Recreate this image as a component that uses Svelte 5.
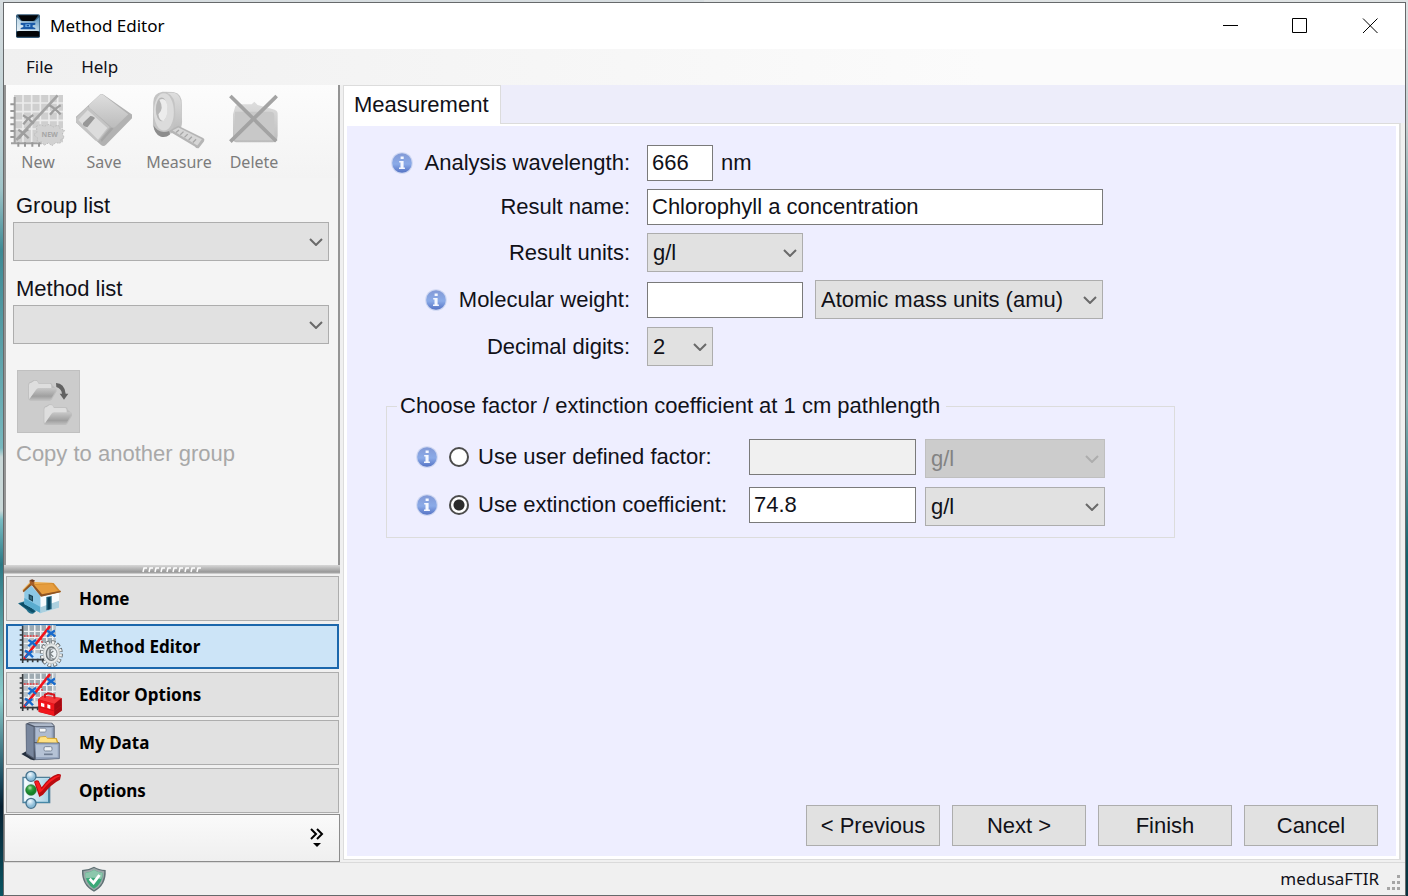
<script lang="ts">
  let wavelength = $state('666');
  let resultName = $state('Chlorophyll a concentration');
  let weight = $state('');
  let factor = $state('');
  let coefficient = $state('74.8');
  let mode = $state('coefficient');
  let active = $state('Method Editor');
  const sections = ['Home', 'Method Editor', 'Editor Options', 'My Data', 'Options'];
</script>

{#snippet chevron()}
  <svg class="chevron" viewBox="0 0 14 8" aria-hidden="true"><path d="M1 1l6 6 6-6" /></svg>
{/snippet}

{#snippet info()}
  <svg class="info" viewBox="0 0 22 22" aria-hidden="true">
    <circle cx="11" cy="11" r="10.8" fill="#cdd6f1" />
    <circle cx="11" cy="11" r="9.8" fill="url(#infoFill)" />
    <path d="M9.6 4.5h3.1v2.5H9.6zM8.2 9h4.4v6.6h1.3V17H8v-1.4h1.5v-5.2H8.2z" fill="#f4f7ff" />
  </svg>
{/snippet}

{#snippet chart()}
  <path d="M46 166h98v84H46z" fill="#b9c2c8" />
  <path d="M46 184h98M46 202h98M46 220h98M46 238h98M62 166v84M80 166v84M98 166v84M116 166v84M134 166v84" stroke="#eef1f3" stroke-width="4" />
  <path d="M48 168h12v14H48zm18 0h12v14H66zm18 0h12v14H84zm18 0h12v14h-12zm18 0h12v14h-12zM48 186h12v14H48zm18 0h12v14H66zm18 0h12v14H84zm36 0h12v14h-12zM102 204h12v14h-12zm18 0h12v14h-12zM84 222h12v14H84z" fill="#98a5ac" opacity=".8" />
  <path d="M44 168v104M36 269h72" stroke="#34393d" stroke-width="5" fill="none" />
  <path d="M35 180h9M35 195h9M35 210h9M35 225h9M35 240h9M35 255h9M44 269v10M59 266v11M74 266v11M89 266v11M104 266v11" stroke="#34393d" stroke-width="5" />
  <path d="M47 198h46M99 204l4 16" stroke="#e8383b" stroke-width="4" stroke-dasharray="6 3" />
  <path d="M50 264L124 171" stroke="#f3131a" stroke-width="8" stroke-linecap="round" />
  <path d="M117 182q12 6 25 18M141 182q-13 6-24 18M61 210q12 6 23 18M84 209q-12 8-23 20M51 242q12 6 24 20M73 243q-12 8-22 20" stroke="#176acb" stroke-width="7" fill="none" />
{/snippet}

{#snippet folder()}
  <path d="M86 584q0-8 8-9l8-5 10 1 5 8h36q5 1 5 7l12 10 1 8-14 24q-3 4-8 4H93q-7 0-7-7z" fill="#bdbdbd" />
  <path d="M88 585q0-7 7-7l9-6 8 1 5 8h34q4 1 4 7v8h-40l-25 32q-2-3-2-8z" fill="#dedede" />
  <path d="M89 628l20-29q3-5 8-5h50q5 2 2 7l-14 24q-3 4-8 4H92z" fill="url(#folderFill)" />
{/snippet}

{#snippet sectionIcon(name: string)}
  {#if name === 'Home'}
    <svg viewBox="24 21 150 129" aria-hidden="true">
      <path d="M30 100l32-10 22 34-9 7q-12 2-20-12z" fill="#23708c" />
      <path d="M33 101l25-5 23 30-9 1z" fill="#0c4d67" />
      <path d="M49 60l18-16 32 35v51L49 102z" fill="#8cc8e5" />
      <path d="M49 84v18l50 28v-18z" fill="#5aaccf" />
      <path d="M97 76l56-11v48l-55 17z" fill="#f7fbfd" />
      <path d="M97 112l56-20v21l-55 17z" fill="#abd0df" />
      <path d="M115 81l16-3v39l-16 4z" fill="#246985" />
      <path d="M119 83l8-2v36l-8 2z" fill="#073f58" />
      <path d="M62 72l13 6v17l-13-7z" fill="#173e50" /><path d="M65 77l7 3v10l-7-4z" fill="#31687d" />
      <path d="M67 35l66 3 26 27-58 13-29-35-25 21-4-4z" fill="#edae52" />
      <path d="M72 43l65-4 22 27-58 13z" fill="#d38b2f" />
      <path d="M74 45l59-3 17 21-47 10z" fill="#e69d3e" />
      <path d="M44 63l27-27 31 37 57-11-2 5-58 13-28-35-24 22z" fill="#8d5424" />
      <path d="M64 32l15-2v13l-11 4z" fill="#a65e28" /><path d="M64 31l9-3 8 4-7 4z" fill="#6b3a20" />
    </svg>
  {:else if name === 'Method Editor'}
    <svg viewBox="24 165 150 129" aria-hidden="true">
      {@render chart()}
      <g fill="none">
        <ellipse cx="130" cy="251" rx="26" ry="32" fill="#eceeee" stroke="#5f6568" stroke-width="17" pathLength="168" stroke-dasharray="9 5" />
        <ellipse cx="130" cy="251" rx="26" ry="32" stroke="#f0f2f2" stroke-width="12" pathLength="168" stroke-dasharray="6 8" stroke-dashoffset="-1.5" />
        <ellipse cx="130" cy="251" rx="24" ry="30" fill="#e6e9e9" stroke="#c0c5c6" stroke-width="3" />
        <ellipse cx="130" cy="251" rx="15" ry="20" fill="#cbd0d3" stroke="#6e7578" stroke-width="4" />
        <ellipse cx="136" cy="251" rx="11" ry="15" fill="#eef3f6" stroke="#93999c" stroke-width="3" />
        <path d="M126 236v30M126 251l10-8M126 251l10 9" stroke="#7a8184" stroke-width="4" />
      </g>
    </svg>
  {:else if name === 'Editor Options'}
    <svg viewBox="24 309 150 129" aria-hidden="true">
      <g transform="translate(0 144)">{@render chart()}</g>
      <path d="M90 388l14-11 57 7 1 37-23 17-47-12z" fill="#cf1118" />
      <path d="M91 389l48 13v35l-47-12z" fill="#f1151b" /><path d="M139 402l22-17v37l-22 15z" fill="#a50911" />
      <path d="M91 388l15-11 54 7-21 17z" fill="#f5383a" />
      <path d="M111 383v-9l9-4 18 4 2 12" fill="none" stroke="#d5131b" stroke-width="6" />
      <path d="M99 398l10 3v11l-10-3zM118 403l9 3v11l-9-3z" fill="#fff" /><path d="M91 410l48 13 22-16" stroke="#c20a12" stroke-width="2" fill="none" />
    </svg>
  {:else if name === 'My Data'}
    <svg viewBox="24 453 150 129" aria-hidden="true">
      <path d="M40 552l16-9 25 12 2 15q-15 2-22-6z" fill="#25303f" />
      <path d="M53 461l11-4 68 1 8 9v47l14 3v49l-73 4-27-17z" fill="#4c5566" />
      <path d="M55 462l22 9v92l-22-14z" fill="#78869d" /><path d="M60 460h70l8 8H80z" fill="#aeb9ca" />
      <path d="M80 470h57v46H80z" fill="#94a3bb" /><path d="M84 474h47v35H84z" fill="#aebbd0" />
      <rect x="94" y="475" width="20" height="11" rx="3" fill="#f6f8fa" stroke="#6b778a" stroke-width="2" />
      <path d="M86 519l6-19 21-2 4 5 29 1 6 15z" fill="#d5a52e" /><path d="M91 517l6-15 17-1 4 5 25 1 4 12z" fill="#ffe284" />
      <path d="M79 519h75v47l-71 3z" fill="#96a6bf" stroke="#59657a" stroke-width="2" /><path d="M84 524h65v37H84z" fill="#b5c2d5" />
      <rect x="108" y="530" width="24" height="13" rx="4" fill="#edf1f5" stroke="#7a8799" stroke-width="3" /><path d="M108 553h26" stroke="#6e7c91" stroke-width="5" />
    </svg>
  {:else}
    <svg viewBox="24 597 150 129" aria-hidden="true">
      <path d="M45 622h80v76H45z" fill="#c0e0ef" stroke="#517f99" stroke-width="4" />
      <path d="M49 626h72v68H49z" fill="url(#paper)" />
      <path d="M122 628v69H48" stroke="#4688a7" stroke-width="4" fill="none" />
      <circle cx="69" cy="619" r="15" fill="url(#blueBall)" stroke="#47738e" stroke-width="4" />
      <circle cx="69" cy="700" r="15" fill="url(#blueBall)" stroke="#47738e" stroke-width="4" />
      <circle cx="69" cy="660" r="16" fill="url(#greenBall)" stroke="#226e32" stroke-width="2" />
      <path d="M78 635q7-6 14-3l9 20q23-33 48-40 10-1 10 4l-3 13q-25 12-51 45l-11 7z" fill="#bb0c11" />
      <path d="M81 636q7-4 10-1l10 23q23-35 52-42l4 2q-29 11-55 45l-8 6z" fill="#fa1c20" />
    </svg>
  {/if}
{/snippet}

<svg class="defs" width="0" height="0" aria-hidden="true">
  <defs>
    <linearGradient id="infoFill" x1="0" y1="0" x2="0" y2="1"><stop offset="0" stop-color="#8299d6" /><stop offset=".55" stop-color="#8babe8" /><stop offset="1" stop-color="#5472c4" /></linearGradient>
    <linearGradient id="folderFill" x1="0" y1="0" x2="0" y2="1"><stop offset="0" stop-color="#c8c8c8" /><stop offset=".7" stop-color="#9f9f9f" /><stop offset="1" stop-color="#bababa" /></linearGradient>
    <linearGradient id="silver" x1="0" y1="0" x2="0" y2="1"><stop offset="0" stop-color="#dedede" /><stop offset="1" stop-color="#bcbcbc" /></linearGradient>
    <linearGradient id="appFill" x1="0" y1="1" x2="1" y2="0"><stop offset="0" stop-color="#e9f2f7" /><stop offset=".45" stop-color="#c2dbea" /><stop offset="1" stop-color="#558fbb" /></linearGradient>
    <linearGradient id="paper"><stop offset="0" stop-color="#f8fdff" /><stop offset="1" stop-color="#a8d2e6" /></linearGradient>
    <radialGradient id="blueBall" cx=".4" cy=".3"><stop offset="0" stop-color="#f4fbff" /><stop offset="1" stop-color="#8abbd7" /></radialGradient>
    <radialGradient id="greenBall" cx=".4" cy=".3"><stop offset="0" stop-color="#b8e5ae" /><stop offset=".5" stop-color="#309f40" /><stop offset="1" stop-color="#158328" /></radialGradient>
  </defs>
</svg>

<div class="desktop">
  <div class="window">
    <header class="titlebar">
      <svg class="app-icon" viewBox="48 38 72 72" aria-hidden="true">
        <rect x="48" y="39" width="72" height="71" rx="5" fill="#345a78" />
        <path d="M50 47l14 13h40l14-13v42H50z" fill="url(#appFill)" />
        <path d="M54 42h61l-10 13q-2 4-8 4H71q-6 0-8-4zM50 92q4-3 10-3h48q6 0 10 3v14H50z" fill="#020407" />
        <path d="M62 64h44v6l-8 2v5l8 3v4H62v-4l8-3v-5l-8-2z" fill="#1a59a7" /><path d="M76 69h15v8H76z" fill="#77b6ed" /><path d="M80 71h7v4h-7z" fill="#174b92" />
      </svg>
      <span class="title">Method Editor</span>
      <div class="caption">
        <button aria-label="Minimize"><svg viewBox="0 0 16 16"><path d="M1 7.5h15" /></svg></button>
        <button aria-label="Maximize"><svg viewBox="0 0 16 16"><path d="M.5.5h14v14H.5z" /></svg></button>
        <button aria-label="Close"><svg viewBox="0 0 16 16"><path d="M1 .5l14.5 14.5M15.500 .5L1 15" /></svg></button>
      </div>
    </header>

    <nav class="menu" aria-label="Menu"><button>File</button><button>Help</button></nav>

    <div class="body">
      <aside class="sidebar">
        <div class="tools">
          <div class="toolbar">
            <button disabled>
              <svg viewBox="33 275 168 180" aria-hidden="true">
                <path d="M45 290h147v142H45z" fill="#cfcfcf" />
                <path d="M45 314h147M45 340h147M45 366h147M45 392h147M72 290v142M98 290v142M124 290v142M150 290v142M176 290v142" stroke="#ececec" stroke-width="5" />
                <path d="M47 296v142M36 435h92" stroke="#a0a0a0" stroke-width="6" />
                <path d="M34 318h13M34 338h13M34 358h13M34 378h13M34 398h13M34 416h13M58 432v13M78 432v13M100 432v13M120 432v13" stroke="#989898" stroke-width="6" />
                <path d="M52 425L176 291" stroke="#a4a4a4" stroke-width="8" />
                <path d="M151 321q15 8 34 27M185 321q-15 8-32 28M72 351q15 8 32 25M103 350q-15 8-30 28M58 394q15 8 31 26M88 393q-15 8-28 28" stroke="#9e9e9e" stroke-width="7" fill="none" />
                <path d="M112 384l12-5 12 5 14-6 13 8 14-6 7 12 13 4-7 11 6 11-10 5-3 12-13-2-11 9-11-8-13 7-6-10-15 1 2-13-12-10 10-7z" fill="#d2d2d2" stroke="#bdbdbd" stroke-width="3" stroke-dasharray="5 4" />
                <text x="152" y="415" text-anchor="middle" font-size="21" font-weight="700" fill="#a6a6a6">NEW</text>
              </svg>
              <span>New</span>
            </button>
            <button disabled>
              <svg viewBox="230 275 168 180" aria-hidden="true">
                <path d="M228 357l75-69q5-3 10 1l86 60q4 4 0 10l-79 80q-7 7-15 1l-73-66q-8-8-4-17z" fill="#b2b2b2" />
                <path d="M271 318l33-30q4-1 9 3l74 57-39 37q-6 5-12 1l-66-58q-3-6 1-10z" fill="url(#silver)" />
                <path d="M229 360l36-36 66 62-34 42q-5 2-10-2l-56-53z" fill="#c4c4c4" />
                <path d="M237 365l28-30 59 54-28 35z" fill="#dcdcdc" />
                <path d="M251 374l22-21q7-1 14 6l-23 28q-8-1-13-7z" fill="#979797" />
                <path d="M304 424l28-33q5-5 10 0l-35 40z" fill="#a5a5a5" />
              </svg>
              <span>Save</span>
            </button>
            <button class="wide" disabled>
              <svg viewBox="450 270 174 180" aria-hidden="true">
                <path d="M457 305q0-29 29-33l34 1q29 6 26 42v37q3 29-8 41l-48 17q-28-4-34-32z" fill="#c4c4c4" />
                <path d="M500 275h22q23 8 22 42v35q2 27-8 38l-22 5q15-30 11-69 1-40-25-51z" fill="url(#silver)" />
                <ellipse cx="490" cy="335" rx="31" ry="58" fill="#dcdcdc" /><ellipse cx="483" cy="327" rx="18" ry="37" fill="#b6b6b6" />
                <path d="M476 297q21-10 25 20 3 30-12 46-13 1-16-21 19-17 3-45z" fill="#ececec" />
                <path d="M458 377q17 28 49 17l2 11q-14 12-30 6-19-8-21-34z" fill="#8d8d8d" />
                <path d="M505 394l30-16 77 38q6 3 3 10l-17 22q-8 1-12-6z" fill="#b5b5b5" />
                <path d="M517 393l18-10 73 37-14 19z" fill="#d6d6d6" /><path d="M528 399l9-8m4 15l10-10m3 18l10-10m3 18l10-10m3 18l10-10" stroke="#a6a6a6" stroke-width="4" />
              </svg>
              <span>Measure</span>
            </button>
            <button disabled>
              <svg viewBox="680 275 168 180" aria-hidden="true">
                <path d="M701 348l7-24q5-6 12-6h37l8-8 10 10 44 12q17 3 16 16v64q-1 21-16 20H711q-9-1-10-10z" fill="url(#silver)" />
                <path d="M707 340h106q12 0 12 12v74H712q-8 0-8-8z" fill="#c8c8c8" />
                <path d="M697 297l130 128M828 297L697 426" stroke="#a3a3a3" stroke-width="11" stroke-linecap="square" />
              </svg>
              <span>Delete</span>
            </button>
          </div>

          <div class="lists">
            <label for="group">Group list</label>
            <div class="select"><select id="group"><option></option></select>{@render chevron()}</div>
            <label for="method">Method list</label>
            <div class="select"><select id="method"><option></option></select>{@render chevron()}</div>
            <button id="copy" class="copy" disabled aria-label="Copy to another group">
              <svg viewBox="55 543 183 183" aria-hidden="true">
                {@render folder()}
                <g transform="translate(46 73)">{@render folder()}</g>
                <path d="M169 579q25 0 29 32h8l-13 18-13-18h7q-2-15-17-20z" fill="#626262" />
              </svg>
            </button>
            <label class="muted" for="copy">Copy to another group</label>
          </div>
        </div>

        <div class="splitter"><svg viewBox="0 0 60 6" aria-hidden="true">
          {#each Array(10) as _, i}<path d="M{i * 6 + 1} 5l1-4h3" stroke="#fff" stroke-width="1.500" fill="none" />{/each}
        </svg></div>

        <nav class="sections" aria-label="Sections">
          {#each sections as name}
            <button class:active={active === name} onclick={() => (active = name)}>
              {@render sectionIcon(name)}<span>{name}</span>
            </button>
          {/each}
        </nav>
        <div class="overflow">
          <button aria-label="More sections"><svg viewBox="0 0 16 20"><path d="M2 1l5 5-5 5M8 1l5 5-5 5" fill="none" stroke="#000" stroke-width="2" /><path d="M4 15h8l-4 4z" /></svg></button>
        </div>
      </aside>

      <main>
        <div class="tabs" role="tablist"><button role="tab" aria-selected="true">Measurement</button></div>
        <div class="frame">
          <form class="page" onsubmit={(e) => e.preventDefault()}>
            <div class="fields">
              <label for="wavelength">{@render info()}Analysis wavelength:</label>
              <div class="row"><input id="wavelength" class="w-small" type="text" bind:value={wavelength} /><span>nm</span></div>
              <label for="name">Result name:</label>
              <div class="row"><input id="name" class="w-full" type="text" bind:value={resultName} /></div>
              <label for="units">Result units:</label>
              <div class="row"><div class="select w-medium"><select id="units"><option>g/l</option></select>{@render chevron()}</div></div>
              <label for="weight">{@render info()}Molecular weight:</label>
              <div class="row wide-gap">
                <input id="weight" class="w-medium" type="text" bind:value={weight} />
                <div class="select grow"><select aria-label="Molecular weight units"><option>Atomic mass units (amu)</option></select>{@render chevron()}</div>
              </div>
              <label for="digits">Decimal digits:</label>
              <div class="row"><div class="select w-small"><select id="digits"><option>2</option></select>{@render chevron()}</div></div>
            </div>

            <fieldset>
              <legend>Choose factor / extinction coefficient at 1 cm pathlength</legend>
              <div class="choices">
                <div class="choice">{@render info()}<input id="use-factor" type="radio" name="mode" value="factor" bind:group={mode} /><label for="use-factor">Use user defined factor:</label></div>
                <input type="text" aria-label="User defined factor" disabled={mode !== 'factor'} bind:value={factor} />
                <div class="select"><select aria-label="Factor units" disabled={mode !== 'factor'}><option>g/l</option></select>{@render chevron()}</div>
                <div class="choice">{@render info()}<input id="use-coefficient" type="radio" name="mode" value="coefficient" bind:group={mode} /><label for="use-coefficient">Use extinction coefficient:</label></div>
                <input type="text" aria-label="Extinction coefficient" disabled={mode !== 'coefficient'} bind:value={coefficient} />
                <div class="select"><select aria-label="Coefficient units" disabled={mode !== 'coefficient'}><option>g/l</option></select>{@render chevron()}</div>
              </div>
            </fieldset>

            <div class="actions">
              <button>&lt; Previous</button><button>Next &gt;</button><button>Finish</button><button>Cancel</button>
            </div>
          </form>
        </div>
      </main>
    </div>

    <footer>
      <svg class="shield" viewBox="244 466 76 78" aria-hidden="true">
        <path d="M282 468q14 9 35 10 3 46-35 65-38-19-36-65 21-1 36-10z" fill="#5f7074" />
        <path d="M282 472q14 8 31 10 1 40-31 57-33-17-32-57 18-2 32-10z" fill="#9aa8a8" />
        <path d="M282 478q12 7 26 9 0 32-26 47-26-15-26-47 14-2 26-9z" fill="#3aa877" />
        <path d="M282 478q12 7 26 9-1 10-4 19-20-7-47-3-2-8-1-16 14-2 26-9z" fill="#8cc7ac" />
        <path d="M266 507l6-6 8 9 15-19 7 4-21 28z" fill="#fff" />
      </svg>
      <span>medusaFTIR</span>
      <svg class="grip" viewBox="0 0 14 16" aria-hidden="true"><path d="M10 0h3v3h-3zM5 6h3v3H5zM10 6h3v3h-3zM0 12h3v3H0zM5 12h3v3H5zM10 12h3v3h-3z" /></svg>
    </footer>
  </div>
</div>

<style>
  :global(body) { margin: 0; }
  * { box-sizing: border-box; }
  button, input, select { font: inherit; color: inherit; margin: 0; }
  button { background: none; border: 0; padding: 0; }
  svg { display: block; flex: none; }
  .defs { position: absolute; }

  .desktop {
    min-height: 100vh;
    padding: 2px 2px 0 3px;
    display: flex;
    font: 22px/26px "Liberation Sans", Arial, sans-serif;
    color: #111118;
    background:
      linear-gradient(#dfe3e4, #c3cecf 14%, #7da5a6 24%, #86b0b2 45%, #14616b 62%, #0a4b57 80%, #08323f) right / 50% 100% no-repeat,
      linear-gradient(#d7dde0, #bccfd3 15%, #9fc4c8 21%, #3e8a94 28%, #78b8be 50%, #c9d8d8 51%, #c9d8d8 57%, #78bcc2 58%, #2c7884 63%, #8ccdcc 78%, #1c4c60 87%, #071f30 90%, #0a5663) left / 50% 100% no-repeat;
  }
  .window { flex: 1; min-width: 0; display: flex; flex-direction: column; border: 1px solid #66696b; background: #f0f0f0; }

  .titlebar { display: flex; align-items: center; height: 46px; padding-left: 12px; background: #fff; font: 17px/24px "Noto Sans", sans-serif; color: #000; }
  .app-icon { width: 24px; height: 24px; margin-right: 10px; }
  .caption { margin-left: auto; display: flex; }
  .caption button { width: 70px; height: 46px; display: grid; place-items: center; }
  .caption svg { width: 16px; height: 16px; fill: none; stroke: #000; stroke-width: 1; }

  .menu { display: flex; gap: 28px; height: 36px; padding: 0 22px; background: linear-gradient(90deg, #f0f0f0, #fbfbfb 70%); font: 17px/24px "Noto Sans", sans-serif; }

  .body { flex: 1; display: flex; min-height: 0; }
  .sidebar { width: 336px; flex: none; display: flex; flex-direction: column; background: #f0f0f0; }
  .tools { flex: 1; background: #f4f4f4; border: solid #949494; border-width: 0 2px; }
  .toolbar { display: flex; gap: 10px; height: 93px; padding: 5px 4px 0; background: linear-gradient(#fcfcfc, #f3f3f3); font: 16px/24px "Noto Sans", sans-serif; color: #7c7c7c; }
  .toolbar button { width: 56px; display: flex; flex-direction: column; align-items: center; }
  .toolbar .wide { width: 74px; }
  .toolbar svg { width: 56px; height: 60px; }
  .lists { display: flex; flex-direction: column; padding: 15px 9px 0 7px; }
  .lists label { padding-left: 3px; margin-bottom: 3px; }
  .lists .select { margin-bottom: 15px; }
  .copy { width: 63px; height: 63px; margin: 11px 0 8px 4px; border: 1px solid #c0c0c0; background: #ccc; }
  .copy svg { width: 61px; height: 61px; }
  .lists .muted { color: #a8a8a8; }

  .splitter { height: 9px; display: grid; place-items: center; background: linear-gradient(#d8d8d8, #969696 80%, #dedede); }
  .splitter svg { width: 60px; height: 6px; }
  .sections { display: flex; flex-direction: column; gap: 3px; padding: 2px 1px 1px 2px; font: 700 17px/24px "Noto Sans", sans-serif; color: #000; }
  .sections button { height: 45px; display: flex; align-items: center; gap: 13px; padding-left: 9px; border: 1px solid #adadad; background: #e1e1e1; }
  .sections .active { border: 2px solid #1c67ac; padding-left: 8px; background: #cce4f7; }
  .sections svg { width: 50px; height: 43px; margin: -1px 0; }
  .overflow { height: 48px; display: flex; justify-content: flex-end; align-items: center; padding: 0 14px; border: 1px solid #8c8c8c; background: linear-gradient(#fafafa, #efefef); }
  .overflow svg { width: 16px; height: 20px; }

  main { flex: 1; min-width: 0; display: flex; flex-direction: column; padding: 0 4px 2px 3px; background: #f0f0f0; }
  .tabs { display: flex; height: 38px; margin-right: -4px; background: #ededfa; }
  .tabs button { padding: 0 11px 0 10px; border: 1px solid #dcdcdc; border-bottom: 0; background: #fff; position: relative; height: 39px; }
  .frame { flex: 1; display: flex; padding: 2px 3px 3px; border: solid #dcdcdc; border-width: 1px 2px 1px 1px; background: #fff; }
  .page { flex: 1; min-width: 0; display: flex; flex-direction: column; padding: 19px 18px 10px 39px; background: #eeeeff; }

  .fields { display: grid; grid-template-columns: 244px minmax(0, 456px); column-gap: 17px; row-gap: 8px; align-items: center; }
  .fields > label { display: flex; align-items: center; justify-content: flex-end; gap: 12px; }
  .row { display: flex; align-items: center; gap: 8px; }
  .wide-gap { gap: 12px; }
  .info { width: 22px; height: 22px; }
  input[type='text'] { height: 36px; min-width: 0; padding: 0 4px; border: 1px solid #7a7a7a; border-radius: 0; background: #fff; outline: 0; }
  input[type='text']:disabled { background: #f0f0f0; }
  .w-small { width: 66px; }
  .w-medium { width: 156px; }
  .w-full { width: 100%; }
  .grow { flex: 1; min-width: 0; }
  .select { display: grid; align-items: center; }
  .select > :global(*) { grid-area: 1 / 1; }
  select { width: 100%; height: 39px; padding: 1px 20px 0 5px; appearance: none; border: 1px solid #adadad; border-radius: 0; background: #e1e1e1; opacity: 1; }
  select:disabled { color: #838383; background: #ccc; border-color: #bfbfbf; }
  .chevron { justify-self: end; width: 14px; height: 8px; margin-right: 6px; fill: none; stroke: #6a6a6a; stroke-width: 2; pointer-events: none; }
  select:disabled + .chevron { stroke: #adadad; }

  fieldset { width: 100%; max-width: 789px; margin: 27px 0 0; padding: 20px 69px 11px 29px; border: 1px solid #dcdcdc; }
  legend { margin-left: -19px; padding: 0 6px 0 3px; }
  .choices { display: grid; grid-template-columns: minmax(0, 1fr) 167px 180px; gap: 9px; align-items: start; }
  .choice { display: flex; align-items: center; gap: 9px; height: 36px; white-space: nowrap; }
  .choice .info { margin-right: 2px; }
  input[type='radio'] { appearance: none; width: 20px; height: 20px; border: 2px solid #4c4c4c; border-radius: 50%; background: #fff; }
  input[type='radio']:checked { background: radial-gradient(circle, #2c2c2c 5px, #fff 6px); }

  .actions { margin-top: auto; display: flex; justify-content: flex-end; gap: 12px; }
  .actions button { width: 134px; height: 41px; border: 1px solid #adadad; background: #e1e1e1; }

  footer { display: flex; align-items: center; height: 33px; padding: 0 4px 0 77px; border-top: 1px solid #dadada; font: 17px/24px "Noto Sans", sans-serif; }
  footer span { margin-left: auto; }
  .shield { width: 26px; height: 26px; }
  .grip { width: 14px; height: 16px; margin: 8px 0 0 8px; fill: #a5a5a5; }
</style>
